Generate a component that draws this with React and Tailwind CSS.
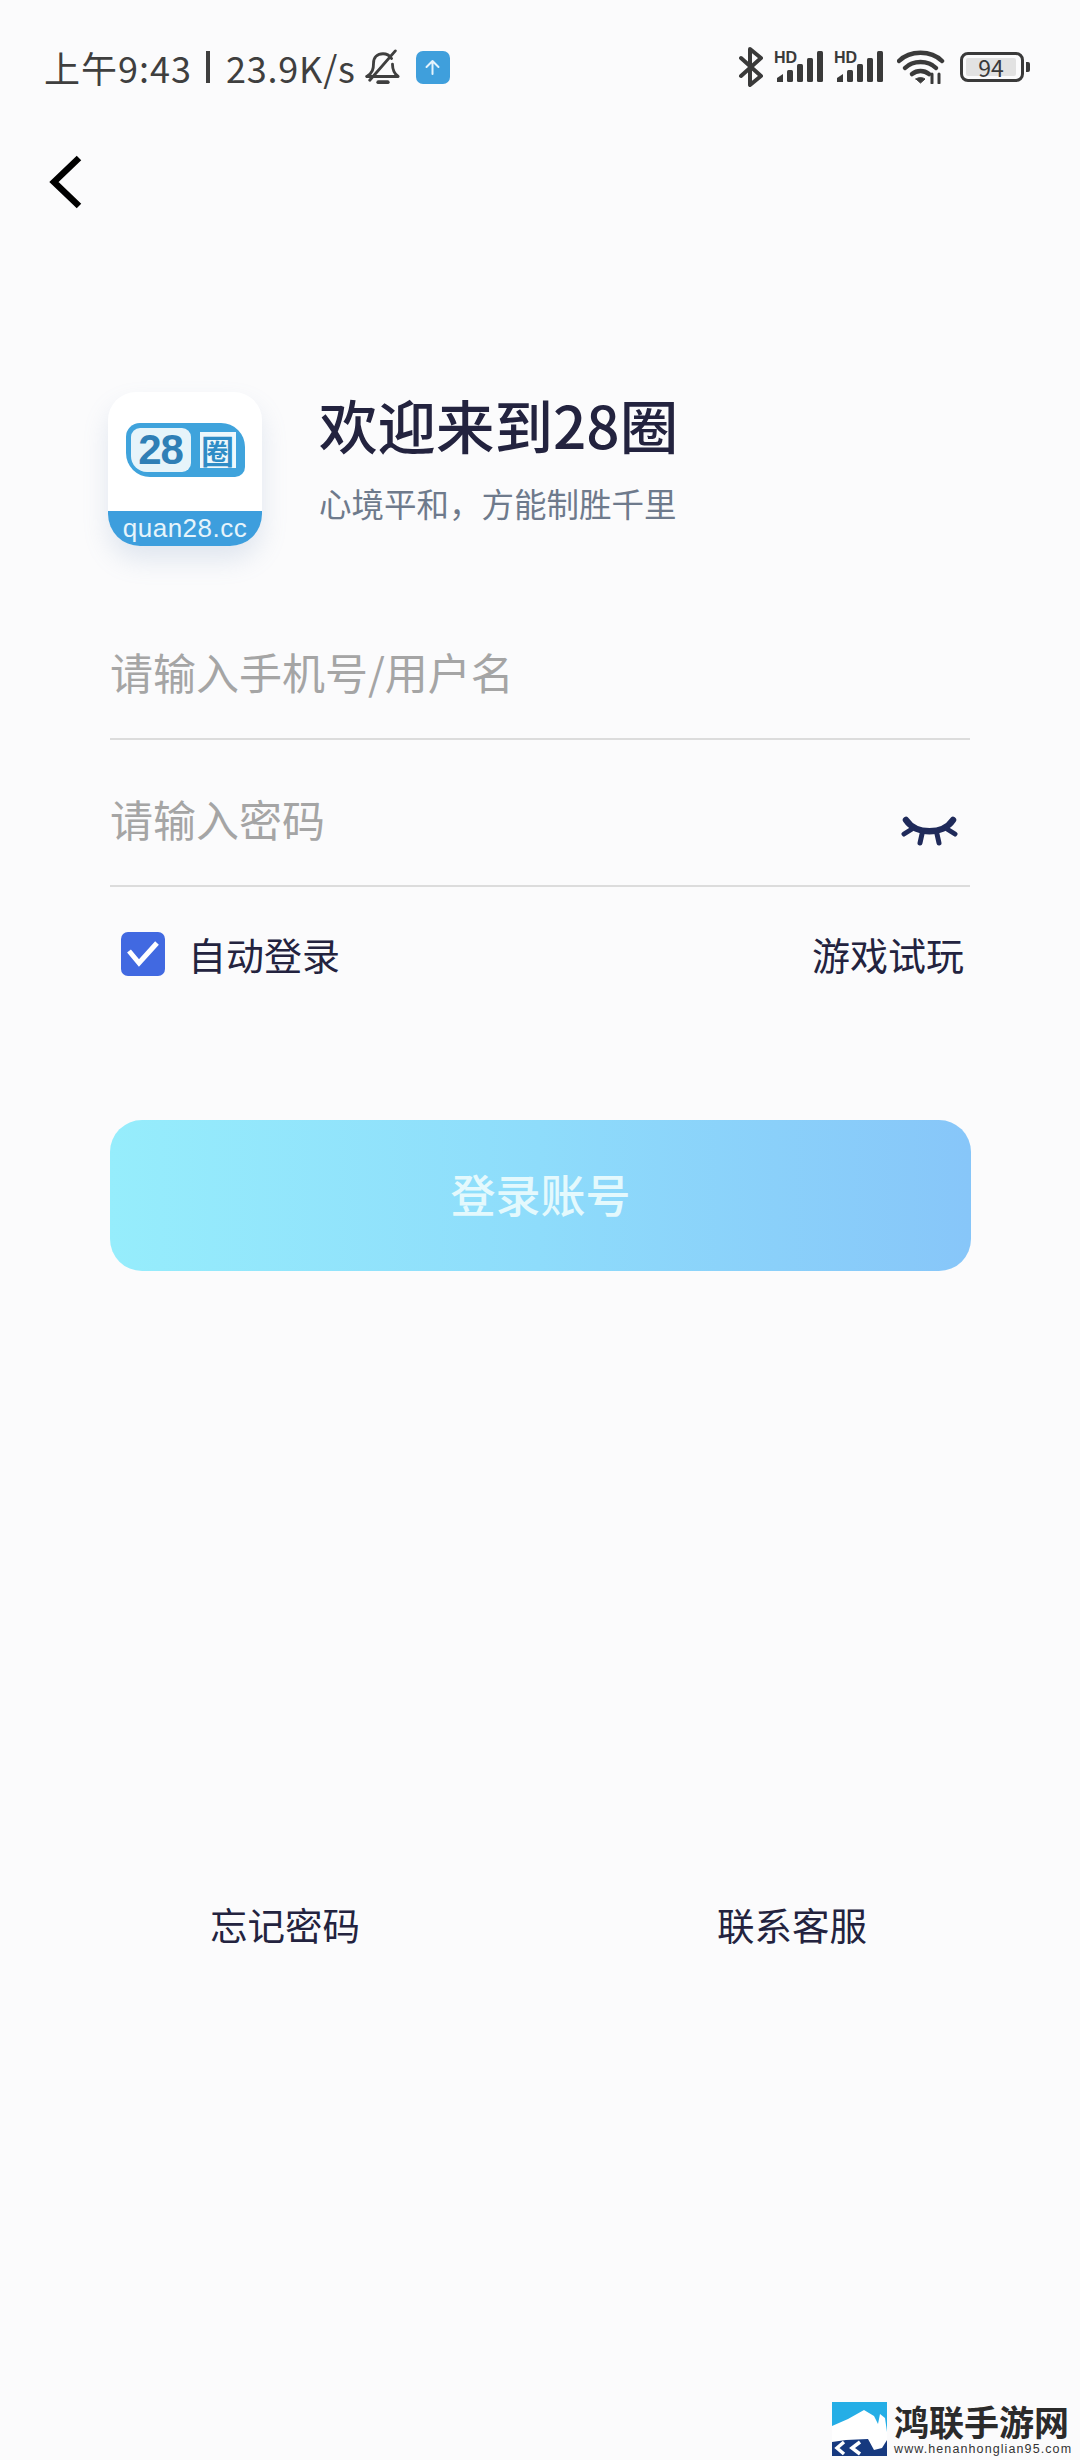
import React from "react";

function Signal() {
  return (
    <svg width="51" height="34" viewBox="0 0 51 34" className="block">
      <text x="0" y="13" fontSize="16" fontWeight="700" fill="#3a3a3a" fontFamily="Liberation Sans">HD</text>
      <path d="M3 32 v-4 l6-4 v8 z" fill="#3a3a3a" />
      <rect x="13" y="20" width="6" height="12" rx="1.5" fill="#3a3a3a" />
      <rect x="23" y="14" width="6" height="18" rx="1.5" fill="#3a3a3a" />
      <rect x="33" y="8" width="6" height="24" rx="1.5" fill="#3a3a3a" />
      <rect x="43" y="1" width="6" height="31" rx="1.5" fill="#3a3a3a" />
    </svg>
  );
}

function StatusBar() {
  return (
    <div className="flex items-center justify-between h-[86px] pt-[48px] pl-[44px] pr-[50px]">
      <div className="flex items-center text-[36px] leading-none text-[#3f3f3f]">
        <span className="tracking-[1px]">上午9:43</span>
        <span className="ml-[14px] w-[4px] h-[32px] bg-[#3f3f3f]" />
        <span className="ml-[16px] tracking-[0.8px]">23.9K/s</span>
        <svg width="36" height="36" viewBox="0 0 38 38" className="ml-[9px]" fill="none" stroke="#3f3f3f" strokeWidth="3" strokeLinecap="round" strokeLinejoin="round">
          <path d="M2 29 C8 25 9 21 9 15 C9 9 13 5 19 5 C23 5 26 7 28 10" />
          <path d="M29 16 C29 22 31 26 35 29 H2" />
          <path d="M5 33 L32 2" />
          <path d="M14 35 H24" strokeWidth="4" />
        </svg>
        <div className="ml-[15px] flex items-center justify-center w-[34px] h-[33px] rounded-[7px] bg-[#3f9fdc]">
          <svg width="19" height="19" viewBox="0 0 19 19" fill="none" stroke="#e4f3fc" strokeWidth="2" strokeLinecap="round" strokeLinejoin="round">
            <path d="M9.5 16 V3 M3.5 9 L9.5 3 L15.5 9" />
          </svg>
        </div>
      </div>
      <div className="flex items-center">
        <svg width="26" height="40" viewBox="0 0 26 40" fill="none" stroke="#3a3a3a" strokeWidth="4" strokeLinejoin="round" strokeLinecap="round">
          <path d="M3 11 L23 29 L12 38 V2 L23 11 L3 29" />
        </svg>
        <div className="ml-[10px]"><Signal /></div>
        <div className="ml-[9px]"><Signal /></div>
        <svg width="48" height="34" viewBox="0 0 48 34" className="ml-[12px]" fill="none" stroke="#3a3a3a" strokeLinecap="round">
          <path d="M2 11 C13 0 34 0 45 11" strokeWidth="4.5" />
          <path d="M8 18 C16 10 31 10 39 18" strokeWidth="4.5" />
          <path d="M15 24 C20 20 27 20 32 24" strokeWidth="4.5" />
          <path d="M19 29 L23.5 33 L28 29 C25 27 22 27 19 29 Z" fill="#3a3a3a" strokeWidth="1" />
          <path d="M35 24 V33 M42 24 V33" strokeWidth="3" />
        </svg>
        <div className="ml-[15px] flex items-center">
          <div className="w-[64px] h-[30px] rounded-[8px] border-[3px] border-[#3a3a3a] p-[3px] flex">
            <div className="w-[50px] h-full bg-[#e2e2e2] rounded-[2px] flex items-center justify-center text-[23px] leading-none text-[#3a3a3a]">94</div>
          </div>
          <div className="ml-[2px] w-[4px] h-[10px] rounded-r-[2px] bg-[#3a3a3a]" />
        </div>
      </div>
    </div>
  );
}

function AppLogo() {
  return (
    <div className="w-[154px] h-[154px] shrink-0 -ml-[2px] rounded-[28px] rounded-b-[32px] bg-white overflow-hidden shadow-[0_14px_26px_rgba(120,150,190,0.2)] flex flex-col">
      <div className="flex-1 flex items-start justify-center pt-[31px]">
        <div className="w-[119px] h-[54px] rounded-tl-[14px] rounded-tr-[24px] rounded-br-[10px] rounded-bl-[24px] bg-[#3fa3dc] flex items-center pl-[5px] gap-[9px]">
          <div className="w-[60px] h-[44px] rounded-[9px] rounded-bl-[16px] bg-[#e6f4fa] flex items-center justify-center text-[42px] leading-none font-bold tracking-[-1px] text-[#2f7fb6] font-['Liberation_Sans',sans-serif]">28</div>
          <div className="w-[36px] h-[36px] bg-[#eef8fc] flex items-center justify-center text-[33px] leading-none font-bold text-[#2f8cc6]">圈</div>
        </div>
      </div>
      <div className="h-[35px] bg-[#3d9edd] flex items-center justify-center pb-[2px] text-[26px] leading-none text-[#e6f4fb] tracking-[0.5px] font-['Liberation_Sans',sans-serif]">quan28.cc</div>
    </div>
  );
}

function EyeClosed() {
  return (
    <svg width="57" height="30" viewBox="0 0 57 30" fill="none" stroke="#1f2a5a" strokeWidth="6.5" strokeLinecap="round">
      <path d="M5 4 C15 19 42 19 52 4" />
      <path d="M3 18 L11 13 M54 18 L46 13" strokeWidth="5" />
      <path d="M21 18 L19 27 M36 18 L38 27" strokeWidth="5" />
    </svg>
  );
}

function Watermark() {
  return (
    <div className="absolute right-[11px] bottom-[4px] flex items-start">
      <svg width="55" height="54" viewBox="0 0 55 54">
        <rect width="55" height="54" fill="#25aee6" />
        <path d="M0 24 L16 17 L32 8 L42 14 L46 22 L48 12 L53 16 L55 30 V54 H0 Z" fill="#ffffff" />
        <path d="M0 40 L14 38 L36 37 L42 48 L50 46 L55 38 V54 H0 Z" fill="#16397f" />
        <path d="M12 40 L5 46 L12 52 M28 40 L20 46 L28 52" fill="none" stroke="#ffffff" strokeWidth="3.5" />
      </svg>
      <div className="ml-[7px] w-[175px] flex flex-col">
        <div className="text-[35px] leading-[38px] font-bold text-[#2b2b2b] whitespace-nowrap">鸿联手游网</div>
        <div className="mt-[2px] text-[12.5px] leading-[14px] text-[#333333] tracking-[1.1px] whitespace-nowrap font-['Liberation_Sans',sans-serif]">www.henanhonglian95.com</div>
      </div>
    </div>
  );
}

export default function App() {
  return (
    <div className="relative w-[1080px] h-[2460px] overflow-hidden bg-[#fbfbfc] font-['Noto_Sans_CJK_SC',sans-serif]">
      <StatusBar />
      <svg width="36" height="56" viewBox="0 0 36 56" className="block ml-[47px] mt-[68px]" fill="none" stroke="#000000" strokeWidth="6.5">
        <path d="M32 4 L7 28 L32 52" />
      </svg>

      <div className="px-[110px]">
        <div className="flex items-start mt-[182px]">
          <AppLogo />
          <div className="ml-[57px] flex flex-col">
            <div className="-mt-[2px] text-[58.5px] leading-[68px] font-medium text-[#23233f] whitespace-nowrap">欢迎来到28圈</div>
            <div className="mt-[23px] text-[32.5px] leading-[44px] text-[#6e7a8c] whitespace-nowrap">{"心境平和\uFF0C方能制胜千里"}</div>
          </div>
        </div>

        <div className="mt-[90px] h-[104px] border-b-2 border-[#dcdcdc] text-[43px] leading-[60px] text-[#a5a5a5] pt-[5px] whitespace-nowrap">请输入手机号/用户名</div>
        <div className="h-[146px] relative">
          <div className="h-[147px] border-b-2 border-[#dcdcdc] text-[43px] leading-[60px] text-[#a5a5a5] pt-[48px]">请输入密码</div>
          <div className="absolute right-[12px] top-[76px]"><EyeClosed /></div>
        </div>

        <div className="mt-[46px] flex items-center justify-between pl-[11px] pr-[6px]">
          <div className="flex items-center">
            <div className="w-[44px] h-[44px] rounded-[7px] bg-[#4169e1] flex items-center justify-center">
              <svg width="32" height="26" viewBox="0 0 32 26" fill="none" stroke="#ffffff" strokeWidth="5">
                <path d="M2 10 L12 22 L30 2" />
              </svg>
            </div>
            <div className="ml-[23px] text-[38px] leading-[44px] text-[#23233f]">自动登录</div>
          </div>
          <div className="text-[38px] leading-[44px] text-[#23233f]">游戏试玩</div>
        </div>

        <button className="mt-[144px] w-[861px] h-[151px] rounded-[32px] bg-linear-to-r from-[#96edfc] via-[#8edcfb] to-[#87c6f9] flex items-center justify-center pb-[5px] text-[45px] leading-none font-medium text-[#e4f9fd]">登录账号</button>

        <div className="mt-[630px] flex justify-between pl-[100px] pr-[103px] text-[37.5px] leading-[46px] text-[#23233f]">
          <span>忘记密码</span>
          <span>联系客服</span>
        </div>
      </div>

      <Watermark />
    </div>
  );
}
